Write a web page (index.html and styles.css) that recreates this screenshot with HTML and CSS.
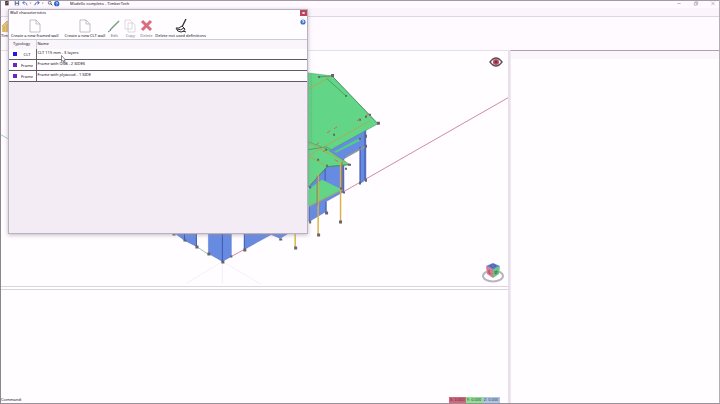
FILE: index.html
```html
<!DOCTYPE html>
<html lang="en">
<head>
<meta charset="utf-8">
<title>Modello completo - TimberTech</title>
<link rel="stylesheet" href="styles.css">
</head>
<body>
<div class="app">
  <header class="titlebar">
    <svg class="quick" viewBox="0 0 66 8" aria-hidden="true">
      <path d="M0 0h4v5H0z" fill="#493b49"/><path d="M1 3l2-2" stroke="#d9ad4c"/>
      <path d="M11 0h5v5h-5z" fill="#42618e"/><path d="M12 0h3v2h-3zM12 3h3v2h-3z" fill="#eef1fa"/>
      <path d="M20 2h3q2 0 2 3M22 0l-2 2 2 2" fill="none" stroke="#4779c4"/>
      <path d="M28 2h2l-1 1zM42 2h2l-1 1z" fill="#555"/>
      <path d="M39 2h-3q-2 0-2 3M37 0l2 2-2 2" fill="none" stroke="#315eac"/>
      <circle cx="51" cy="2" r="1.700" fill="#e5edf8" stroke="#555" stroke-width=".8"/><path d="M52 3l2 2" stroke="#333"/>
      <circle cx="59" cy="3" r="3" fill="#2865c6"/><path d="M58 2q1-1 2 0 0 1-1 1v1m0 .4v.6" stroke="#fff" stroke-width=".8" fill="none"/>
    </svg>
    <span class="doc-title">Modello completo - TimberTech</span>
    <div class="window-buttons">
      <button aria-label="Minimize"><svg viewBox="0 0 6 6"><path d="M1 3h4"/></svg></button>
      <button aria-label="Restore"><svg viewBox="0 0 6 6"><path d="M1 2h3v3H1zM2 2V1h3v3H4"/></svg></button>
      <button aria-label="Close"><svg viewBox="0 0 6 6"><path d="M1 1l4 4M5 1L1 5"/></svg></button>
    </div>
  </header>
  <div class="tabs"></div>
  <div class="ribbon">
    <svg viewBox="0 0 8 13" aria-hidden="true"><path d="M1 6l5-5 2 2v9H1z" fill="#e7c775"/><path d="M1 6l5-5 2 2M3 6v6M6 4v8" fill="none" stroke="#c99a3c" stroke-width=".7"/></svg>
    <span>Tim</span>
  </div>
  <main class="workspace">
    <section class="left">
      <div class="viewport">
        <svg class="scene" viewBox="0 51 508 235" preserveAspectRatio="xMinYMin meet" role="img" aria-label="3D building model">
          <path d="M342 193L510 97" stroke="#cf8ba3" stroke-width="1"/>
          <path d="M0 135l9 5" stroke="#a9d1b7"/>
          <path d="M222 262l-36 22M222 262l39 23M222 262v22" stroke="#efe6f0" stroke-width=".6"/>
          <path d="M196 247l12 8" stroke="#86ba83" stroke-width=".8"/><path d="M231 257l13-7" stroke="#d36d84" stroke-width=".8"/>
          <g fill="#688be2" stroke="#4565be" stroke-width=".4">
            <path d="M172 232h24v15l-12-6z"/><path d="M208 232h23v25l-9 5-14-8z"/><path d="M244 232h47l-11 7-9-4-27 15z"/>
            <path d="M328 152l38-25v53l-6 4v-34l-16 9v33l-18 10v10l-17 10v-38l14-22z"/>
          </g>
          <path d="M184 232v9M196 232v15M222 232v30M244 232v18M325 165v16M360 147v37M365 130v50M343 160v33M309 207v15M326 202v11" fill="none" stroke="#344a99" stroke-width=".8"/>
          <path d="M308 190l14-10 20 10-34 17z" fill="#62d587"/>
          <path d="M308 73l24 3 46 48-49 27-21-8z" fill="#62d587" stroke="#419667" stroke-width=".5"/>
          <path d="M334 152l24-13 2 2-24 12z" fill="#50cf80"/>
          <path d="M308 142l18 7 24 16-23 2-19 21z" fill="#62d587" stroke="#419667" stroke-width=".5"/>
          <path d="M311 74v70" stroke="#4bab6c" stroke-width=".7" stroke-dasharray="1 1"/>
          <path d="M332 76l46 48M319 77l13-1M326 78l20 18M308 150l18-3 5 3M308 188l19-21 22-2" fill="none" stroke="#35824f" stroke-width=".6"/>
          <path d="M308 89l24-13M308 156l62-35M308 143l39 20M308 156l19 11M309 207l34-17M346 157l19-10" fill="none" stroke="#c0a047" stroke-width=".8"/>
          <path d="M318 174v62M340.500 162v60M295 232v16" fill="none" stroke="#dcae3e" stroke-width="1.400"/>
          <path d="M317 176v30M342 162v28" stroke="#8c7b70" stroke-width="1"/>
          <g fill="#676270">
            <path d="M331 74h3v3h-3zM377 122h3v3h-3zM369 114h2v2h-2zM359 119h2v2h-2zM365 116h2v2h-2zM345 95h2v2h-2zM318 76h2v2h-2zM333 134h2v2h-2zM325 149h2v2h-2zM348 164h3v2h-3zM345 168h2v2h-2zM326 165h2v2h-2zM317 159h2v2h-2zM359 138h2v2h-2zM365 135h2v3h-2zM365 145h2v3h-2zM359 182h2v3h-2zM365 179h2v3h-2zM343 192h2v2h-2zM340 188h2v2h-2zM309 187h2v2h-2zM309 221h2v3h-2zM325 212h3v3h-3zM317 234h3v3h-3zM339 221h3v3h-3zM294 247h3v3h-3zM172 234h3v2h-3zM183 240h3v2h-3zM195 246h3v3h-3zM207 253h3v3h-3zM221 261h3v3h-3zM230 256h2v2h-2zM243 249h3v3h-3zM279 239h3v2h-3z"/>
          </g>
          <path d="M327 133l3-2M334 129l3-2M357 121l3-2M366 116l3-2M316 145l3-2M323 152l3-2M335 160l3 2" stroke="#da674d" stroke-width="1"/>
        </svg>
        <button class="eye" aria-label="Visibility"><svg viewBox="0 0 14 10"><path d="M1 5q6-8 12 0-6 8-12 0z" fill="#fff" stroke="#574a59" stroke-width="1.400"/><circle cx="7" cy="5" r="3" fill="#c0485d"/><circle cx="7" cy="5" r="1.300" fill="#70303f"/></svg></button>
        <button class="cube" aria-label="View cube"><svg viewBox="0 0 24 22"><ellipse cx="12" cy="14" rx="10" ry="5.500" fill="#fff" stroke="#b9b5bf" stroke-width="2"/><path d="M5 4l7-3 7 3-7 4z" fill="#617ed5"/><path d="M5 4l7 4v8l-6-4z" fill="#e57586"/><path d="M12 8l7-4-1 8-6 4z" fill="#62cb78"/><path d="M9 4l3-1.500L15 4l-3 1.500zM8 8v3l2 1M14 9v3l2-1V9l-2 1" fill="none" stroke="#555b87" stroke-width=".8"/></svg></button>
      </div>
      <div class="console">
        <label for="cmd">Command:</label><input id="cmd" type="text">
        <div class="coords"><span class="x">X: 0.000</span><span class="y">Y: 0.000</span><span class="z">Z: 0.000</span></div>
      </div>
    </section>
    <aside class="side"><div class="side-head"></div></aside>
  </main>
</div>
<section class="dialog" role="dialog" aria-labelledby="dialog-title">
  <div class="dialog-title"><span id="dialog-title">Wall characteristics</span><button class="close" aria-label="Close dialog"><svg viewBox="0 0 6 6"><path d="M2 2l2 2M4 2L2 4" stroke="#fff"/></svg></button></div>
  <div class="toolbar">
    <button class="create"><svg viewBox="0 0 14 14"><path class="page" d="M2 1h6l4 4v8H2zM8 1v4h4"/></svg>Create a new framed wall</button>
    <button><svg viewBox="0 0 14 14"><path class="page" d="M2 1h6l4 4v8H2zM8 1v4h4"/></svg>Create a new CLT wall</button>
    <button class="muted"><svg viewBox="0 0 14 14"><path d="M3 11L12 2" stroke="#70a17a" stroke-width="1.500"/><path d="M1 13l3-2" stroke="#777" /></svg>Edit</button>
    <button class="muted"><svg viewBox="0 0 14 14"><path class="page faint" d="M2 1h5l2 2v7H2zM5 4h5l2 2v7H5z"/></svg>Copy</button>
    <button class="muted"><svg viewBox="0 0 14 14"><path d="M3 2l9 9M12 2l-9 9" stroke="#d96d7b" stroke-width="3"/></svg>Delete</button>
    <button><svg viewBox="0 0 14 14"><path d="M12 0L8 8" stroke="#302a31" stroke-width="1.300"/><path d="M2 9q3 1 6-2l3 3q-1 3-4 3-4 0-5-4z" fill="#fff" stroke="#302a31"/><path d="M3 10q4 2 7-1M9 12l3 1" stroke="#302a31" fill="none"/></svg>Delete not used definitions</button>
    <button class="help" aria-label="Help"><svg viewBox="0 0 6 6"><circle cx="3" cy="3" r="2.600" fill="#3f73cd"/><path d="M2 2q1-1 2 0 0 1-1 1v1" fill="none" stroke="#fff" stroke-width=".8"/></svg></button>
  </div>
  <table>
    <thead><tr><th class="type">Typology</th><th>Name</th></tr></thead>
    <tbody>
      <tr><td class="type"><i class="swatch blue"></i><span>CLT</span></td><td>CLT 115 mm - 3 layers</td></tr>
      <tr><td class="type"><i class="swatch"></i><span>Frame</span></td><td>Frame with OSB - 2 SIDES</td></tr>
      <tr><td class="type"><i class="swatch"></i><span>Frame</span></td><td>Frame with plywood - 1 SIDE</td></tr>
    </tbody>
  </table>
  <svg class="cursor" viewBox="0 0 5 8" aria-hidden="true"><path d="M.5.500v6l1.500-1 1 2 1-.5-1-2h1.500z" fill="#fff" stroke="#444" stroke-width=".6"/></svg>
</section>
</body>
</html>
```
FILE: styles.css
```css
* { box-sizing: border-box; }
body { margin: 0; font-family: "Noto Sans", "Open Sans", sans-serif; font-size: 4px; line-height: 6px; color: #120b13; background: #fffcff; }
button { border: 0; padding: 0; background: none; font: inherit; color: inherit; }
svg { display: block; }
.app { height: 100vh; display: flex; flex-direction: column; border-left: 1px solid #8d858e; border-right: 1px solid #b5acb6; border-bottom: 1px solid #999199; }
.titlebar { height: 8px; display: flex; gap: 3px; align-items: flex-start; border-top: 1px solid #a39aa4; background: #fffaff; }
.quick { width: 66px; height: 7px; }
.doc-title { line-height: 5px; }
.window-buttons { margin-left: auto; display: flex; gap: 11px; padding-right: 3px; }
.window-buttons svg { width: 6px; height: 5px; fill: none; stroke: #a79ca8; stroke-width: .8; }
.tabs { height: 9px; background: #fbf4fc; border-bottom: 1px solid #dcd6e2; }
.ribbon { height: 33px; padding: 3px 0; background: #fefaff; }
.ribbon svg { width: 8px; height: 13px; }
.ribbon span { display: block; width: 8px; overflow: hidden; }
.workspace { flex: 1; min-height: 0; display: grid; grid-template-columns: 17fr 7fr; }
.left { display: grid; grid-template-rows: 2fr 1fr; border-right: 2px solid #e8e0ea; border-top: 1px solid #e6deeb; min-height: 0; }
.viewport { position: relative; min-height: 0; background: #fffdff; }
.scene { width: 100%; height: 100%; }
.eye { position: absolute; right: 5px; top: 6px; }
.eye svg { width: 14px; height: 10px; }
.cube { position: absolute; right: 3px; bottom: 2px; }
.cube svg { width: 24px; height: 22px; }
.console { display: flex; align-items: flex-end; border-top: 4px double #ddd3df; background: #fffdff; }
.console input { flex: 1; min-width: 0; height: 6px; border: 0; padding: 0; font: inherit; background: none; outline: none; }
.coords { display: flex; margin-right: 8px; color: #3b3640; }
.coords span { width: 17px; text-align: center; white-space: nowrap; }
.x { background: #d5657a; }
.y { background: #8fe294; }
.z { background: #abc6e6; }
.side { border-top: 1px solid #aaa2ac; border-left: 1px solid #eee8f0; background: #fffdff; }
.side-head { height: 8px; background: #fbf6fb; }
.dialog { position: absolute; left: 8px; top: 9px; width: 300px; height: 225px; border: 1px solid #b6b2bf; background: #f3ecf4; box-shadow: 0 1px 4px #9d909fa0; }
.dialog-title { height: 8px; display: flex; justify-content: space-between; padding-left: 1px; background: #fffdff; }
.close { width: 7px; height: 6px; background: #b9485d; }
.close svg { width: 7px; height: 6px; }
.toolbar { height: 21px; display: flex; gap: 2px; align-items: flex-start; padding: 1px 1px 0 2px; background: #fffdff; }
.toolbar button { display: flex; flex-direction: column; align-items: center; white-space: nowrap; }
.toolbar .create { margin-right: 4px; }
.toolbar svg { width: 14px; height: 14px; }
.page { fill: #fff; stroke: #b4aeb6; stroke-width: .8; }
.faint { stroke: #d5ced7; }
.toolbar .muted { color: #756d77; }
.toolbar .help { margin-left: auto; }
.toolbar .help svg { width: 6px; height: 6px; }
table { width: 100%; border-collapse: collapse; table-layout: fixed; background: #fffdff; }
th, td { padding: 1px 1px 0; text-align: left; vertical-align: top; font-weight: 400; line-height: 6px; white-space: nowrap; }
th { height: 9px; background: #faf4fb; border-top: 1px solid #c9cbd6; }
td { height: 11px; border-bottom: 1px solid #625967; }
.type { width: 27px; padding-left: 4px; border-right: 1px solid #6d6471; }
th.type { border-right-color: #d8d0dc; }
td.type { padding-top: 3px; }
td.type span { display: inline-block; width: 14px; text-align: center; }
.swatch { display: inline-block; width: 4px; height: 4px; margin-right: 3px; background: #6d24c4; }
.blue { background: #2418dc; }
.cursor { position: absolute; left: 52px; top: 45px; width: 5px; height: 8px; }
```
